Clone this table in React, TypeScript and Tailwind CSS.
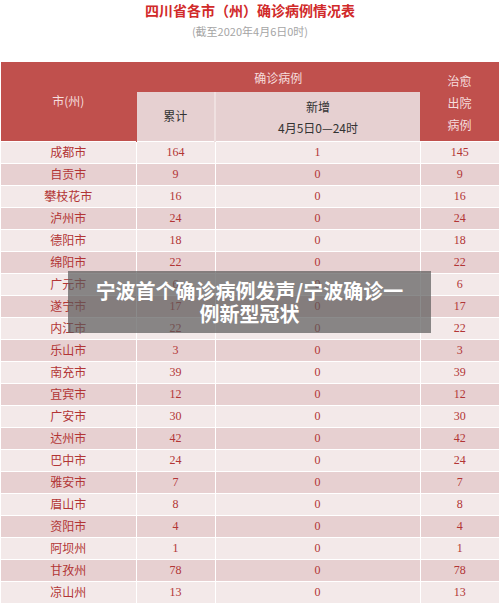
import React from 'react';

type Row = { name: string; total: number; added: number; cured: number };

const rows: Row[] = [
  { name: '成都市', total: 164, added: 1, cured: 145 },
  { name: '自贡市', total: 9, added: 0, cured: 9 },
  { name: '攀枝花市', total: 16, added: 0, cured: 16 },
  { name: '泸州市', total: 24, added: 0, cured: 24 },
  { name: '德阳市', total: 18, added: 0, cured: 18 },
  { name: '绵阳市', total: 22, added: 0, cured: 22 },
  { name: '广元市', total: 6, added: 0, cured: 6 },
  { name: '遂宁市', total: 17, added: 0, cured: 17 },
  { name: '内江市', total: 22, added: 0, cured: 22 },
  { name: '乐山市', total: 3, added: 0, cured: 3 },
  { name: '南充市', total: 39, added: 0, cured: 39 },
  { name: '宜宾市', total: 12, added: 0, cured: 12 },
  { name: '广安市', total: 30, added: 0, cured: 30 },
  { name: '达州市', total: 42, added: 0, cured: 42 },
  { name: '巴中市', total: 24, added: 0, cured: 24 },
  { name: '雅安市', total: 7, added: 0, cured: 7 },
  { name: '眉山市', total: 8, added: 0, cured: 8 },
  { name: '资阳市', total: 4, added: 0, cured: 4 },
  { name: '阿坝州', total: 1, added: 0, cured: 1 },
  { name: '甘孜州', total: 78, added: 0, cured: 78 },
  { name: '凉山州', total: 13, added: 0, cured: 13 },
];

const sans = "font-['Noto_Sans_CJK_SC','Noto_Sans',sans-serif]";
const serif = "font-['Liberation_Serif','Noto_Sans_CJK_SC',serif]";

export default function App() {
  return (
    <div className={`w-[500px] h-[606px] overflow-hidden bg-white ${sans}`}>
      {/* Title */}
      <div className="pt-[1px] text-center text-[14px] leading-[18px] font-bold text-[#d12a2a]">
        四川省各市（州）确诊病例情况表
      </div>
      <div className="mt-[5px] text-center text-[11px] leading-[14px] text-[#a5a5a5]">
        (截至2020年4月6日0时)
      </div>

      <div className="relative mt-[24px] px-[1px]">
        <table className="w-[498px] table-fixed border-collapse text-[12px]">
          <colgroup>
            <col className="w-[135px]" />
            <col className="w-[79px]" />
            <col className="w-[205px]" />
            <col className="w-[79px]" />
          </colgroup>
          <thead>
            <tr className="h-[30px]">
              <th rowSpan={2} className="bg-[#c0504d] font-normal text-[#f6dede] border-r border-[#c0504d]">
                市(州)
              </th>
              <th colSpan={2} className="bg-[#c0504d] font-normal text-[#f6dede] pt-[2px]">
                确诊病例
              </th>
              <th rowSpan={2} className="bg-[#c0504d] font-normal text-[#f6dede] leading-[22px] pt-[4px]">
                治愈
                <br />
                出院
                <br />
                病例
              </th>
            </tr>
            <tr className="h-[49px]">
              <th className="bg-[#e6d0d1] font-normal text-[#333] border-r-2 border-[#efe0e0]">累计</th>
              <th className="bg-[#e6d0d1] font-normal text-[#333] leading-[21px] pt-[2px]">
                新增
                <br />
                4月5日0—24时
              </th>
            </tr>
          </thead>
          <tbody>
            {rows.map((r, i) => (
              <tr
                key={r.name}
                className={`h-[22px] border-t border-white ${i % 2 === 0 ? 'bg-[#f3e9e9]' : 'bg-[#e7d0d1]'}`}
              >
                <td className="text-center text-[#b23535] border-r border-white">{r.name}</td>
                <td className={`text-center text-[#b23535] border-r border-white ${serif}`}>{r.total}</td>
                <td className={`text-center text-[#b23535] border-r border-white ${serif}`}>{r.added}</td>
                <td className={`text-center text-[#b23535] ${serif}`}>{r.cured}</td>
              </tr>
            ))}
          </tbody>
        </table>

        {/* Caption overlay */}
        <div className="absolute left-[68px] top-[209px] w-[363px] h-[62px] bg-[#5a5a5a]/70 flex flex-col items-center justify-center text-white font-bold text-[20px] leading-[23px]">
          <div>宁波首个确诊病例发声/宁波确诊一</div>
          <div>例新型冠状</div>
        </div>
      </div>
    </div>
  );
}
